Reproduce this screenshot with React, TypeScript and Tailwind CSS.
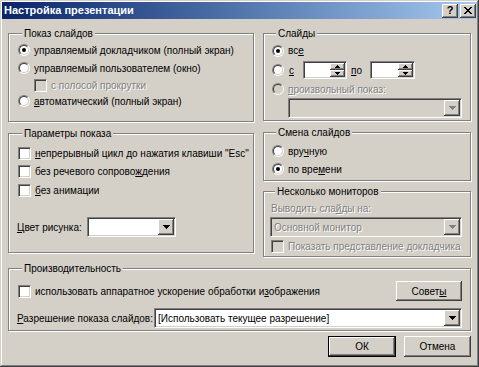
import React from 'react'

const raised =
  'bg-[#d4d0c8] shadow-[inset_-1px_-1px_0_#404040,inset_1px_1px_0_#ffffff,inset_-2px_-2px_0_#808080,inset_2px_2px_0_#d4d0c8]'
const sunken =
  'border border-t-[#808080] border-l-[#808080] border-r-white border-b-white shadow-[inset_1px_1px_0_#404040,inset_-1px_-1px_0_#d4d0c8]'
const dim = 'text-[#808080] [text-shadow:1px_1px_0_#ffffff]'

function Radio({ checked = false, disabled = false }: { checked?: boolean; disabled?: boolean }) {
  return (
    <span className="flex h-[12px] w-[12px] shrink-0 items-center justify-center rounded-full border border-t-[#808080] border-l-[#808080] border-r-white border-b-white">
      <span
        className={`flex h-[10px] w-[10px] items-center justify-center rounded-full border border-t-[#404040] border-l-[#404040] border-r-[#d4d0c8] border-b-[#d4d0c8] ${
          disabled ? 'bg-[#d4d0c8]' : 'bg-white'
        }`}
      >
        {checked && <span className="h-[4px] w-[4px] rounded-full bg-black" />}
      </span>
    </span>
  )
}

function Check({ disabled = false }: { disabled?: boolean }) {
  return <span className={`h-[13px] w-[13px] shrink-0 ${sunken} ${disabled ? 'bg-[#d4d0c8]' : 'bg-white'}`} />
}

function Arrow({ disabled = false }: { disabled?: boolean }) {
  return (
    <svg width="7" height="4" viewBox="0 0 7 4" shapeRendering="crispEdges">
      <path d="M0 0h7v1h-1v1h-1v1h-1v1h-1v-1h-1v-1h-1v-1h-1z" fill={disabled ? '#808080' : '#000'} />
    </svg>
  )
}

function SmallArrow({ up = false }: { up?: boolean }) {
  return (
    <svg width="5" height="3" viewBox="0 0 5 3" shapeRendering="crispEdges" className={up ? 'rotate-180' : ''}>
      <path d="M0 0h5v1h-1v1h-1v1h-1v-1h-1v-1h-1z" fill="#000" />
    </svg>
  )
}

function Combo({
  value = '',
  disabled = false,
  className = ''
}: {
  value?: string
  disabled?: boolean
  className?: string
}) {
  return (
    <div className={`flex h-[20px] p-[1px] ${sunken} ${disabled ? 'bg-[#d4d0c8]' : 'bg-white'} ${className}`}>
      <span className={`flex min-w-0 flex-1 items-center overflow-hidden whitespace-nowrap pl-[2px] ${disabled ? dim : ''}`}>{value}</span>
      <span className={`flex w-[16px] shrink-0 items-center justify-center ${raised}`}>
        <Arrow disabled={disabled} />
      </span>
    </div>
  )
}

function Spin({ className = '' }: { className?: string }) {
  return (
    <div className={`flex h-[18px] bg-white p-[1px] ${sunken} ${className}`}>
      <span className="flex-1" />
      <span className="flex w-[15px] flex-col">
        <span className={`flex flex-1 items-center justify-center ${raised}`}>
          <SmallArrow up />
        </span>
        <span className={`flex flex-1 items-center justify-center ${raised}`}>
          <SmallArrow />
        </span>
      </span>
    </div>
  )
}

function Group({ title, className = '', children }: { title: string; className?: string; children?: React.ReactNode }) {
  return (
    <fieldset className={`flex min-w-0 flex-col border border-[#808080] shadow-[inset_1px_1px_0_#ffffff,1px_1px_0_#ffffff] ${className}`}>
      <legend className="ml-[4px] bg-[#d4d0c8] px-[2px] leading-[13px]">{title}</legend>
      {children}
    </fieldset>
  )
}

function Row({ className = '', children }: { className?: string; children?: React.ReactNode }) {
  return <div className={`flex items-center gap-[4px] whitespace-nowrap ${className}`}>{children}</div>
}

function Button({ children, isDefault = false, className = '' }: { children: React.ReactNode; isDefault?: boolean; className?: string }) {
  if (isDefault) {
    return (
      <div className={`border border-black ${className}`}>
        <div className={`flex h-full w-full items-center justify-center ${raised}`}>{children}</div>
      </div>
    )
  }
  return <div className={`flex items-center justify-center ${raised} ${className}`}>{children}</div>
}

export default function App() {
  return (
    <div className="h-[367px] w-[479px] overflow-hidden bg-[#d4d0c8] pt-[2px] font-['Liberation_Sans',Arial,sans-serif] text-[10px] leading-[13px] text-black shadow-[inset_-1px_-1px_0_#404040,inset_1px_1px_0_#d4d0c8,inset_-2px_-2px_0_#808080,inset_2px_2px_0_#ffffff]">
      {/* Title bar */}
      <div className="mx-[2px] flex h-[17px] items-center justify-between bg-linear-to-r from-[#0a246a] to-[#a6caf0] pl-[2px] pr-[1px]">
        <span className="text-[11px] font-bold text-white">Настройка презентации</span>
        <div className="flex gap-[2px]">
          <span className={`flex h-[14px] w-[16px] items-center justify-center text-[11px] font-bold leading-none ${raised}`}>?</span>
          <span className={`flex h-[14px] w-[16px] items-center justify-center ${raised}`}>
            <svg width="8" height="7" viewBox="0 0 8 7" shapeRendering="crispEdges">
              <path
                d="M0 0h2v1h1v1h2v-1h1v-1h2v1h-1v1h-1v1h-1v1h1v1h1v1h1v1h-2v-1h-1v-1h-2v1h-1v1h-2v-1h1v-1h1v-1h1v-1h-1v-1h-1v-1h-1z"
                fill="#000"
              />
            </svg>
          </span>
        </div>
      </div>

      <div className="px-[8px] pt-[8px]">
        <div className="grid grid-cols-[246px_208px] gap-x-[9px]">
          {/* Left column */}
          <div className="flex min-w-0 flex-col gap-[5px]">
            <Group title="Показ слайдов" className="h-[95px] pl-[9px]">
              <Row className="mt-[1px] h-[18px]">
                <Radio checked />
                <span>
                  управляемый <u>д</u>окладчиком (полный экран)
                </span>
              </Row>
              <Row className="h-[18px]">
                <Radio />
                <span>управляемый пользователем (окно)</span>
              </Row>
              <Row className="h-[16px] gap-[3px] pl-[16px]">
                <Check disabled />
                <span className={dim}>с полосой прокрутки</span>
              </Row>
              <Row className="h-[16px]">
                <Radio />
                <span>
                  <u>а</u>втоматический (полный экран)
                </span>
              </Row>
            </Group>

            <Group title="Параметры показа" className="h-[126px] pl-[9px]">
              <Row className="mt-[4px] h-[18px]">
                <Check />
                <span>
                  <u>н</u>епрерывный цикл до нажатия клавиши "Esc"
                </span>
              </Row>
              <Row className="h-[19px]">
                <Check />
                <span>
                  без речевого сопрово<u>ж</u>дения
                </span>
              </Row>
              <Row className="h-[18px]">
                <Check />
                <span>
                  <u>б</u>ез анимации
                </span>
              </Row>
              <div className="mt-[18px] flex items-center">
                <span className="-ml-[1px] w-[70px] whitespace-nowrap">
                  <u>Ц</u>вет рисунка:
                </span>
                <Combo className="w-[89px]" />
              </div>
            </Group>
          </div>

          {/* Right column */}
          <div className="flex min-w-0 flex-col">
            <Group title="Слайды" className="h-[94px] pl-[8px]">
              <Row className="mt-[1px] h-[19px]">
                <Radio checked />
                <span>
                  вс<u>е</u>
                </span>
              </Row>
              <div className="mt-[1px] flex h-[18px] items-center">
                <Radio />
                <span className="ml-[5px] w-[14px]">
                  <u>с</u>
                </span>
                <Spin className="w-[44px]" />
                <span className="ml-[4px] w-[19px]">
                  <u>п</u>о
                </span>
                <Spin className="w-[45px]" />
              </div>
              <Row className="mt-[1px] h-[18px]">
                <Radio disabled />
                <span className={dim}>
                  <u>п</u>роизвольный показ:
                </span>
              </Row>
              <Combo disabled className="ml-[16px] h-[19px] w-[174px]" />
            </Group>

            <Group title="Смена слайдов" className="mt-[5px] h-[55px] pl-[8px]">
              <Row className="mt-[3px] h-[18px]">
                <Radio />
                <span>
                  вру<u>ч</u>ную
                </span>
              </Row>
              <Row className="h-[18px]">
                <Radio checked />
                <span>
                  по вре<u>м</u>ени
                </span>
              </Row>
            </Group>

            <Group title="Несколько мониторов" className="mt-[4px] h-[72px] pl-[7px]">
              <div className={`mt-[3px] flex h-[14px] items-center ${dim}`}>
                <span>
                  Выводить сла<u>й</u>ды на:
                </span>
              </div>
              <Combo disabled value="Основной монитор" className="mt-[2px] -ml-[1px] h-[19px] w-[192px]" />
              <Row className="h-[18px]">
                <Check disabled />
                <span className={dim}>
                  Показать пре<u>д</u>ставление докладчика
                </span>
              </Row>
            </Group>
          </div>
        </div>

        <Group title="Производительность" className="mt-[5px] h-[69px] pl-[9px] pr-[8px]">
          <div className="mt-[6px] flex h-[20px] items-center justify-between">
            <Row>
              <Check />
              <span>
                использовать аппаратное ускорение обработки и<u>з</u>ображения
              </span>
            </Row>
            <Button className="h-[20px] w-[66px]">
              <span>
                Совет<u>ы</u>
              </span>
            </Button>
          </div>
          <div className="mt-[7px] flex h-[20px] items-center">
            <span className="-ml-[1px] w-[137px] shrink-0 whitespace-nowrap">
              <u>Р</u>азрешение показа слайдов:
            </span>
            <Combo value="[Использовать текущее разрешение]" className="min-w-0 flex-1" />
          </div>
        </Group>

        <div className="mt-[5px] flex justify-end gap-[8px]">
          <Button isDefault className="h-[21px] w-[68px]">
            ОК
          </Button>
          <Button className="h-[21px] w-[67px]">Отмена</Button>
        </div>
      </div>
    </div>
  )
}
